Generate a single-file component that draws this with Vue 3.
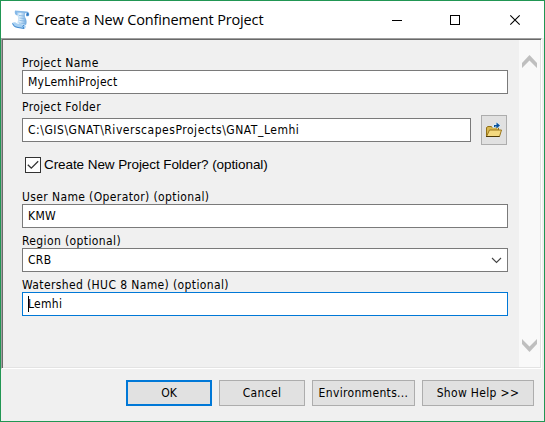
<script setup>
import { ref } from 'vue'

const projectName = ref('MyLemhiProject')
const folder = ref('C:\\GIS\\GNAT\\RiverscapesProjects\\GNAT_Lemhi')
const user = ref('KMW')
const region = ref('CRB')
const watershed = ref('Lemhi')
</script>

<template>
  <div class="window">
    <header class="titlebar">
      <svg class="app-icon" width="20" height="21" viewBox="0 0 20 21">
        <defs>
          <linearGradient id="paper" x1="0" y1="0" x2="1" y2="0">
            <stop offset="0" stop-color="#8fc0ea" />
            <stop offset=".45" stop-color="#e4f3fe" />
            <stop offset="1" stop-color="#68a4dc" />
          </linearGradient>
        </defs>
        <path d="M4 2Q3.500 5 6 6Q8 8 6.500 14L15 16Q16.500 12 14 8Q13 5 15 3Z" fill="url(#paper)" />
        <path d="M4 1.500L16 2.500Q19 3 18 7L15.500 7.500Q14.500 5 16 4L6 3.500Q7 5 6 6.500Q3 5.500 4 1.500Z" fill="#86b9e8" />
        <path d="M16 3.500Q18.500 4 17.500 6.500L15.500 7Q15 5 16 3.500Z" fill="#2f77c0" />
        <path d="M1 14Q4 12.500 6 14.500L13 15.500Q16 17 14 19.500L5 18.500Q2 18 1 14Z" fill="#a7d0f2" />
        <path d="M1.500 14.500Q3 18.500 7 18.500L13 19.500Q10.500 17 13 15.800" fill="none" stroke="#4189cf" />
        <path d="M8 6.500L13 7M8.500 9L13.500 9.500M8.500 11.500L14 12M8 14L14 14.500" stroke="#7fb3df" fill="none" stroke-width=".8" />
      </svg>
      <h1>Create a New Confinement Project</h1>
      <svg class="controls" width="130" height="12" viewBox="0 0 130 12" fill="none" stroke="#000">
        <path d="M0 6.500H10M58.500 1.500H67.500V10.500H58.500Z" shape-rendering="crispEdges" />
        <path d="M118.300 1.300L127.700 10.700M127.700 1.300L118.300 10.700" stroke-width="1.100" />
      </svg>
    </header>

    <main class="panel">
      <form class="form">
        <label class="caption c-name"><span>Project Name</span></label>
        <div class="box"><span class="v-name">{{ projectName }}</span></div>
        <label class="caption c-folder"><span>Project Folder</span></label>
        <div class="folder-row">
          <div class="box"><span class="v-folder">{{ folder }}</span></div>
          <button type="button" class="browse">
            <svg width="18" height="18" viewBox="0 0 18 18">
              <path d="M1.500 16V6.500L3 5.500H6L7.500 6.500H13.500V9" fill="#d8b850" stroke="#927017" />
              <path d="M1.500 15.500L4.500 9H16.500L14.500 15.500Z" fill="#f4d980" stroke="#9b771b" />
              <path d="M1 15.500H14.500" stroke="#503a06" />
              <path d="M7.500 7Q7.500 3 11 3V1L16 4.500L12 8V6.500Z" fill="#d4efff" />
              <path d="M9 6V4H11.500V1.500L15 4.500L11.500 7.500V5.500H10V6Z" fill="#08509c" />
            </svg>
          </button>
        </div>
        <div class="check-row">
          <span class="checkbox">
            <svg width="14" height="14" viewBox="0 0 14 14"><path d="M1.800 6.700L5.300 10.200L12.200 3.300" fill="none" stroke="#333" stroke-width="1.300" /></svg>
          </span>
          <span class="check-label">Create New Project Folder? (optional)</span>
        </div>
        <label class="caption c-user"><span>User Name (Operator) (optional)</span></label>
        <div class="box"><span>{{ user }}</span></div>
        <label class="caption c-region"><span>Region (optional)</span></label>
        <div class="box">
          <span>{{ region }}</span>
          <svg class="drop" width="11" height="7" viewBox="0 0 11 7"><path d="M1 1L5.500 5.500L10 1" fill="none" stroke="#444" stroke-width="1.100" /></svg>
        </div>
        <label class="caption c-water"><span>Watershed (HUC 8 Name) (optional)</span></label>
        <div class="box focused"><i class="caret"></i><span>{{ watershed }}</span></div>
      </form>
      <aside class="scroll">
        <svg width="15" height="13" viewBox="0 0 15 13"><path d="M0 8L7.500 0L15 8V13L7.500 5.500L0 13Z" fill="#bfbfbf" /></svg>
        <svg width="15" height="13" viewBox="0 0 15 13"><path d="M0 0L7.500 7.500L15 0V5L7.500 13L0 5Z" fill="#bfbfbf" /></svg>
      </aside>
    </main>

    <footer class="actions">
      <button class="ok"><span>OK</span></button>
      <button class="cancel"><span>Cancel</span></button>
      <button class="env"><span>Environments...</span></button>
      <button class="help"><span>Show Help &gt;&gt;</span></button>
    </footer>
  </div>
</template>

<style>
body { margin: 0; background: #f0f0f0; }
</style>

<style scoped>
* { box-sizing: border-box; }
.window {
  width: 545px;
  height: 422px;
  border: 1px solid #219653;
  background: #f0f0f0;
  color: #000;
  font: 12px/14px "DejaVu Sans Condensed", "DejaVu Sans", sans-serif;
  font-stretch: condensed;
  letter-spacing: 0.3px;
  white-space: nowrap;
}
.titlebar {
  height: 37px;
  display: flex;
  align-items: center;
  padding: 0 22px 0 10px;
  background: #fff;
}
h1 {
  margin: 0 0 0 4px;
  font: 400 14.5px/20px "Open Sans", sans-serif;
  letter-spacing: -0.15px;
}
.controls { margin-left: auto; }
.panel {
  width: 541px;
  height: 331px;
  display: flex;
  border: 1px solid;
  border-color: #a0a0a0 #fff #fff #a0a0a0;
  box-shadow: inset 1px 1px #696969, inset -1px -1px #e3e3e3;
}
.form { width: 517px; padding: 15px 11px 0 20px; }
.caption { display: flex; height: 16px; align-items: flex-end; letter-spacing: 0.38px; }
.c-folder { height: 24px; padding-bottom: 4px; }
.c-user { height: 17px; }
.c-region, .c-water { height: 20px; }
.box {
  width: 486px;
  height: 24px;
  display: flex;
  align-items: center;
  padding: 0 5px;
  border: 1px solid #7a7a7a;
  background: #fff;
}
.v-folder { letter-spacing: 0.53px; }
.focused { border-color: #0078d7; }
.caret { width: 1px; height: 16px; margin-right: -1px; background: #000; }
.drop { margin-left: auto; }
.folder-row { display: flex; align-items: center; gap: 10px; height: 24px; }
.folder-row .box { width: 449px; }
.browse {
  width: 26px;
  height: 30px;
  flex: none;
  display: grid;
  place-items: center;
  padding: 0;
  border: 1px solid #adadad;
  background: #e1e1e1;
}
.check-row { height: 45px; display: flex; align-items: center; padding: 1px 0 0 3px; gap: 3px; }
.checkbox { width: 16px; height: 16px; display: grid; place-items: center; border: 1px solid #333; background: #fff; }
.check-label { font: 13.5px/16px "Liberation Sans", Arial, sans-serif; letter-spacing: -0.08px; }
.scroll {
  width: 21px;
  display: flex;
  flex-direction: column;
  justify-content: space-between;
  align-items: center;
  margin: 1px 0;
  padding: 15px 0;
  background: #f9f9f9;
}
.actions { display: flex; justify-content: flex-end; gap: 7px; padding: 11px 10px 0 0; }
.actions button {
  height: 26px;
  padding: 0;
  border: 1px solid #adadad;
  background: #e1e1e1;
  color: #000;
  font: inherit;
  letter-spacing: 0.33px;
}
.actions .ok { width: 86px; border: 2px solid #0078d7; letter-spacing: 0; }
.actions .cancel { width: 86px; }
.actions .env { width: 103px; }
.actions .help { width: 112px; }
</style>
